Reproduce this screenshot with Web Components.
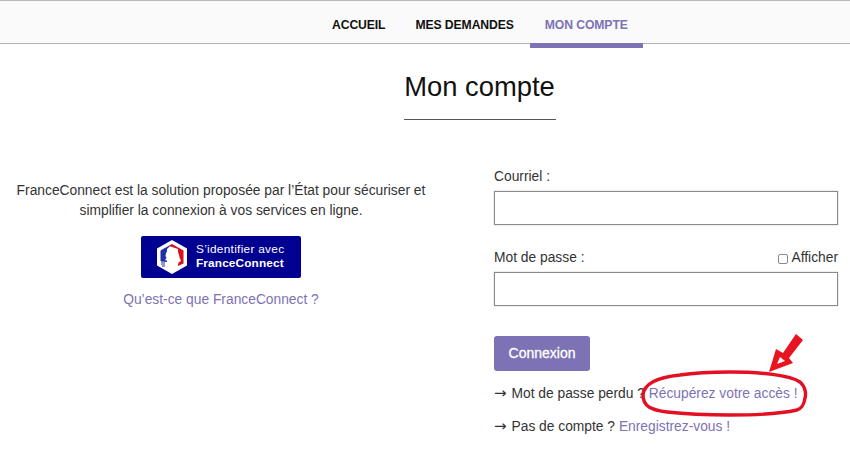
<!DOCTYPE html>
<html lang="fr">
<head>
<meta charset="utf-8">
<title>Mon compte</title>
<style>
  html, body { margin: 0; padding: 0; background: #fff; }
  body { font-family: "Liberation Sans", Arial, sans-serif; font-size: 13.8px; color: #333; width: 850px; height: 449px; overflow: hidden; position: relative; }
</style>
</head>
<body>
<site-nav>
  <nav-link>ACCUEIL</nav-link>
  <nav-link>MES DEMANDES</nav-link>
  <nav-link active>MON COMPTE</nav-link>
</site-nav>
<page-title>Mon compte</page-title>
<account-layout>
  <fc-panel slot="left"></fc-panel>
  <login-form slot="right"></login-form>
</account-layout>
<red-callout></red-callout>

<script>
class SiteNav extends HTMLElement {
  constructor() {
    super();
    const root = this.attachShadow({ mode: "open" });
    root.innerHTML = `
      <style>
        :host { display: block; box-sizing: border-box; height: 44px; background: #fafafa; border-top: 1px solid #bbb; border-bottom: 1px solid #b4adc8; }
        .bar { display: flex; height: 42px; padding-left: 317px; }
      </style>
      <div class="bar"><slot></slot></div>
    `;
  }
}

class NavLink extends HTMLElement {
  constructor() {
    super();
    const root = this.attachShadow({ mode: "open" });
    root.innerHTML = `
      <style>
        :host { display: block; box-sizing: border-box; height: 47px; padding: 17px 15px 0; font-size: 12.2px; line-height: 15px; font-weight: 700; color: #111; letter-spacing: -0.1px; }
        :host([active]) { margin-left: 1px; color: #7d72b4; border-bottom: 5px solid #7d72b4; }
      </style>
      <slot></slot>
    `;
  }
}

class PageTitle extends HTMLElement {
  constructor() {
    super();
    const root = this.attachShadow({ mode: "open" });
    root.innerHTML = `
      <style>
        :host { display: block; text-align: center; padding-left: 109px; }
        h1 { display: inline-block; margin: 25px 0 0; width: 152px; padding-bottom: 14px; border-bottom: 1px solid #555; font-size: 27.4px; line-height: 36px; font-weight: 400; color: #111; white-space: nowrap; }
      </style>
      <h1><slot></slot></h1>
    `;
  }
}

class AccountLayout extends HTMLElement {
  constructor() {
    super();
    const root = this.attachShadow({ mode: "open" });
    root.innerHTML = `
      <style>
        :host { display: grid; grid-template-columns: 442px 344px; column-gap: 52px; margin-top: 47px; }
      </style>
      <slot name="left"></slot>
      <slot name="right"></slot>
    `;
  }
}

class FcPanel extends HTMLElement {
  constructor() {
    super();
    const root = this.attachShadow({ mode: "open" });
    root.innerHTML = `
      <style>
        :host { display: block; text-align: center; padding-top: 14px; color: #333; }
        p { margin: 0; line-height: 20px; }
        .btn { display: flex; align-items: center; width: 160px; height: 42px; margin: 15px auto 0; box-sizing: border-box; background: #000091; border-radius: 2px; color: #fff; text-align: left; padding-left: 16px; gap: 9px; }
        .btn svg { flex: none; }
        .txt { line-height: 13.6px; }
        .txt span { display: block; font-size: 11.8px; letter-spacing: 0.3px; white-space: nowrap; }
        .txt b { display: block; font-size: 11.8px; font-weight: 700; letter-spacing: 0.15px; white-space: nowrap; }
        a { display: block; margin-top: 13px; color: #7d72b4; line-height: 18px; text-decoration: none; }
      </style>
      <p>FranceConnect est la solution proposée par l’État pour sécuriser et<br>simplifier la connexion à vos services en ligne.</p>
      <div class="btn">
        <svg width="30" height="34" viewBox="0 0 30 34">
          <path d="M15 0 L30 8.5 V25.5 L15 34 L0 25.5 V8.5 Z" fill="#fff"/>
          <path d="M15 4 L3.5 10.5 V21 L10 22 V9 Z" fill="#1f2fa8"/>
          <path d="M15 4 L26.5 10.5 V23.5 L21 26 V9 L12 6 Z" fill="#d8101e"/>
          <path d="M8.5 16 Q9 9 15 8.5 Q21 8.5 22 15 Q22.5 18 24 21 L21.5 22.5 L21 25 L18 25.5 L20 30.5 L15 31 L9 28 L11.5 24 L11 21 L8 20 L9.5 18 Z" fill="#fff"/>
          <path d="M4 22 H8 M4 24 H8 M5 26 H8" stroke="#1f2fa8" stroke-width="1"/>
        </svg>
        <div class="txt"><span>S’identifier avec</span><b>FranceConnect</b></div>
      </div>
      <a>Qu’est-ce que FranceConnect ?</a>
    `;
  }
}

class FormField extends HTMLElement {
  constructor() {
    super();
    const root = this.attachShadow({ mode: "open" });
    root.innerHTML = `
      <style>
        :host { display: block; }
        .head { display: flex; justify-content: space-between; align-items: center; height: 18px; line-height: 18px; color: #333; margin-bottom: 5px; }
        input { display: block; box-sizing: border-box; width: 100%; height: 34px; margin: 0; border: 1px solid #8a8a8a; border-radius: 0; background: #fff; outline: none; box-shadow: 0 0 1px #999; }
      </style>
      <div class="head"><span><slot></slot></span><slot name="extra"></slot></div>
      <input>
    `;
    this.input = root.querySelector("input");
  }
  connectedCallback() {
    this.input.type = this.getAttribute("type") || "text";
  }
}

class ShowToggle extends HTMLElement {
  constructor() {
    super();
    const root = this.attachShadow({ mode: "open" });
    root.innerHTML = `
      <style>
        :host { display: flex; align-items: center; gap: 3px; color: #333; }
        i { display: block; box-sizing: border-box; width: 10px; height: 10px; border: 1px solid #888; border-radius: 2px; background: #fff; margin-top: 2px; }
      </style>
      <i></i><slot></slot>
    `;
  }
}

class LoginForm extends HTMLElement {
  constructor() {
    super();
    const root = this.attachShadow({ mode: "open" });
    root.innerHTML = `
      <style>
        :host { display: block; color: #333; padding-top: 1px; }
        form-field + form-field { margin-top: 24px; }
        button { display: block; width: 96px; height: 35px; margin: 30px 0 0; padding: 0 0 2px; border: 0; border-radius: 3px; background: #7d72b4; color: #fff; font: 400 14px "Liberation Sans", Arial, sans-serif; -webkit-text-stroke: 0.3px #fff; }
        p { margin: 0; line-height: 18px; white-space: nowrap; }
        p.first { margin-top: 14px; }
        p.second { margin-top: 15px; }
        a { color: #7d72b4; text-decoration: none; }
        .arrow { display: inline-block; width: 17.5px; font-family: "DejaVu Sans", sans-serif; font-size: 15px; line-height: 14px; }
      </style>
      <form-field>Courriel :</form-field>
      <form-field type="password">Mot de passe :<show-toggle slot="extra">Afficher</show-toggle></form-field>
      <button type="button">Connexion</button>
      <p class="first"><span class="arrow">→</span>Mot de passe perdu ? <a>Récupérez votre accès !</a></p>
      <p class="second"><span class="arrow">→</span>Pas de compte ? <a>Enregistrez-vous !</a></p>
    `;
  }
}

// annotation drawn over the screenshot: ellipse round the link, arrow above it
class RedCallout extends HTMLElement {
  constructor() {
    super();
    const root = this.attachShadow({ mode: "open" });
    root.innerHTML = `
      <style>
        :host { display: block; position: absolute; left: 630px; top: 325px; width: 190px; height: 95px; pointer-events: none; }
      </style>
      <svg width="190" height="95" viewBox="0 0 190 95" fill="none">
        <path d="M13 70 C14 58 30 52 50 50 C70 47 85 47 100 47 C130 47 160 50 170 57 C176 62 176 70 175 73 C174 80 172 83 167 85 C145 90 120 90 100 90 C80 90 55 89 37 87 C22 85 13 82 13 70 Z" stroke="#e30f22" stroke-width="3.4"/>
        <path d="M139 47 L146 24 L153 28 L166 9 L173 15 L159 33 L163 38 Z" fill="#e8141f"/>
        <path d="M147 39 L150 32 L155 36 Z" fill="#fff"/>
      </svg>
    `;
  }
}

customElements.define("site-nav", SiteNav);
customElements.define("nav-link", NavLink);
customElements.define("page-title", PageTitle);
customElements.define("account-layout", AccountLayout);
customElements.define("fc-panel", FcPanel);
customElements.define("form-field", FormField);
customElements.define("show-toggle", ShowToggle);
customElements.define("login-form", LoginForm);
customElements.define("red-callout", RedCallout);
</script>
</body>
</html>
